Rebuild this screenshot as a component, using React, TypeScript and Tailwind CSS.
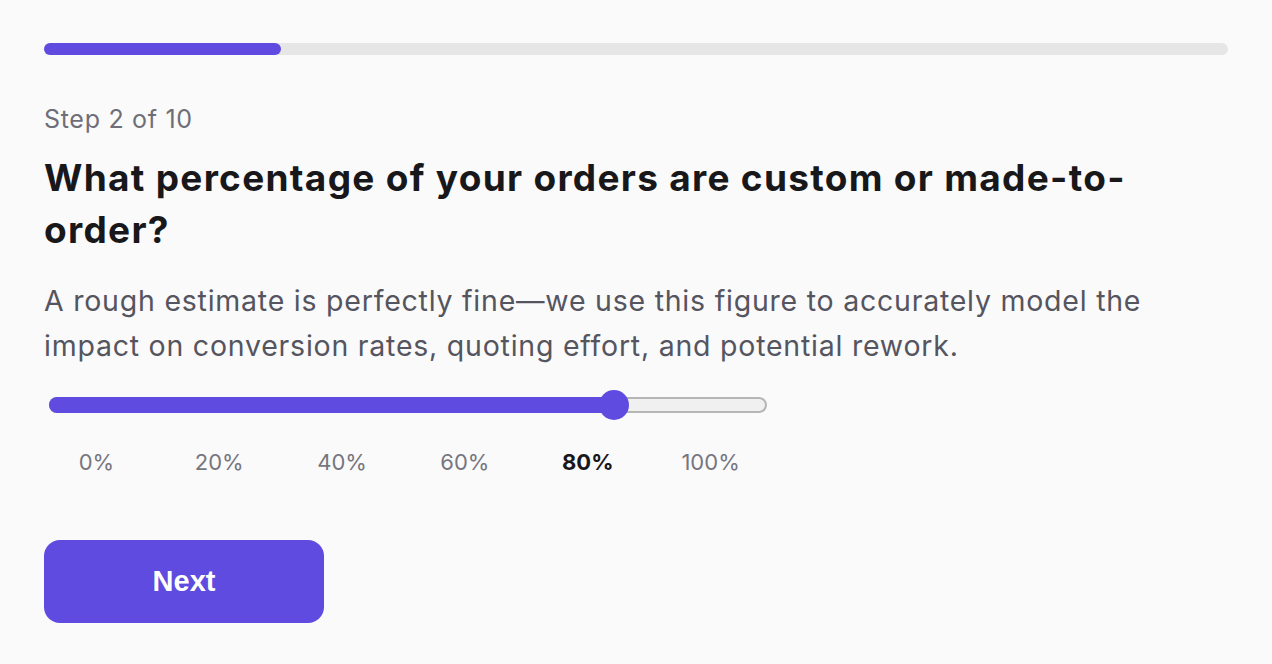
import React from "react";

const labels = ["0%", "20%", "40%", "60%", "80%", "100%"];

export default function App() {
  const value = 80;
  return (
    <div className="min-h-screen w-full bg-[#fafafa] px-[44px] pt-[43px] font-['Inter',sans-serif]">
      <div className="h-3 w-full rounded-full bg-[#e6e6e6]">
        <div className="h-3 w-[20%] rounded-full bg-[#5f4be0]" />
      </div>

      <p className="mt-[48px] text-[25px] leading-[32px] tracking-[0.028em] text-[#6e6e78]">Step 2 of 10</p>

      <h1 className="mt-[17px] text-[37px] font-bold leading-[52px] tracking-[0.035em] text-[#18181b]">
        What percentage of your orders are custom or made-to-order?
      </h1>

      <p className="mt-[22px] text-[28.5px] leading-[45px] tracking-[0.027em] text-[#55555f]">
        A rough estimate is perfectly fine—we use this figure to accurately model the impact on conversion rates, quoting effort, and potential rework.
      </p>

      <div className="ml-[5px] mt-[21px] flex h-[32px] w-[718px] items-center">
        <div className="relative h-[16px] w-full rounded-full border-2 border-[#b5b5b5] bg-[#eff0ef]">
          <div className="absolute -left-[2px] -top-[2px] h-[16px] w-[567px] rounded-l-full bg-[#5f4be0]" />
          <div
            className="absolute top-1/2 h-[30px] w-[30px] -translate-y-1/2 rounded-full bg-[#5f4be0]"
            style={{ left: `${(value / 100) * 688 - 2}px` }}
          />
        </div>
      </div>

      <div className="-ml-[9px] mt-[26px] grid w-[737px] grid-cols-6 text-center text-[22px] leading-[30px]">
        {labels.map((l) => (
          <span key={l} className={l === "80%" ? "font-bold text-[#18181b]" : "text-[#76767f]"}>
            {l}
          </span>
        ))}
      </div>

      <button className="mt-[63px] flex h-[83px] w-[280px] items-center justify-center rounded-[16px] bg-[#5f4be0] font-['Liberation_Sans',Arial,sans-serif] text-[29px] font-bold text-white">
        Next
      </button>
    </div>
  );
}
